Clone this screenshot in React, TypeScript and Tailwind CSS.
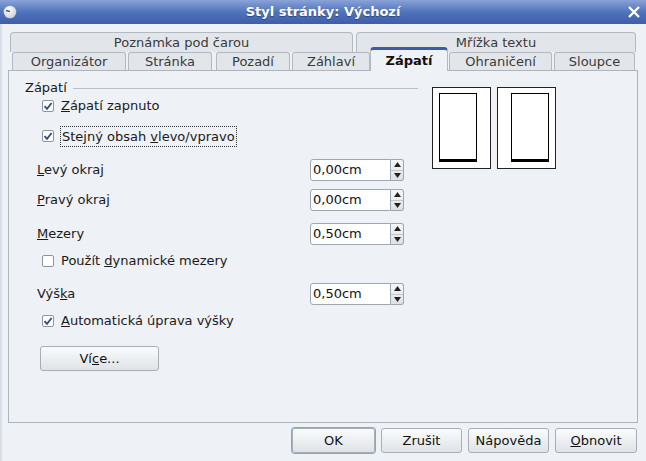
import React from "react";

const font = { fontFamily: '"DejaVu Sans", "Liberation Sans", sans-serif' };

const topTabs = [
  { label: "Poznámka pod čarou", cls: "ml-[2px] w-[343px]" },
  { label: "Mřížka textu", cls: "ml-[3px] w-[280px]" },
];

const bottomTabs = [
  { label: "Organizátor", cls: "ml-[4px] w-[114px]" },
  { label: "Stránka", cls: "ml-[2px] w-[84px]" },
  { label: "Pozadí", cls: "ml-[4px] w-[74px]" },
  { label: "Záhlaví", cls: "ml-[2px] w-[78px]" },
  { label: "Zápatí", cls: "w-[78px]", active: true },
  { label: "Ohraničení", cls: "ml-[1px] w-[103px]" },
  { label: "Sloupce", cls: "ml-[2px] w-[81px]" },
];

const Check: React.FC<{ checked?: boolean }> = ({ checked }) => (
  <span className="flex h-[12px] w-[12px] shrink-0 items-center justify-center rounded-[2px] border border-[#8e959d] bg-white">
    {checked && (
      <svg width="10" height="10" viewBox="0 0 10 10">
        <path d="M1.5 5.2 L4 7.8 L8.6 2" fill="none" stroke="#2f4c86" strokeWidth="1.8" />
      </svg>
    )}
  </span>
);

const Spin: React.FC<{ value: string }> = ({ value }) => (
  <div className="flex h-[22px]">
    <div className="flex w-[81px] items-center rounded-l-[3px] border border-[#9ea6ae] bg-white pl-[2px] text-[13px] text-[#111]">
      {value}
    </div>
    <div className="flex w-[13px] flex-col rounded-r-[3px] border border-l-0 border-[#9ea6ae] bg-gradient-to-b from-[#f6f7f8] to-[#dde1e5]">
      <div className="flex flex-1 items-center justify-center border-b border-[#c3c8cd]">
        <svg width="7" height="5" viewBox="0 0 7 5">
          <path d="M0 5 L3.5 0 L7 5 Z" fill="#222" />
        </svg>
      </div>
      <div className="flex flex-1 items-center justify-center">
        <svg width="7" height="5" viewBox="0 0 7 5">
          <path d="M0 0 L3.5 5 L7 0 Z" fill="#222" />
        </svg>
      </div>
    </div>
  </div>
);

const FieldRow: React.FC<{ label: React.ReactNode; value: string; cls: string }> = ({
  label,
  value,
  cls,
}) => (
  <div className={`flex items-center pl-[28px] ${cls}`}>
    <span className="w-[273px]">{label}</span>
    <Spin value={value} />
  </div>
);

const Btn: React.FC<{ children: React.ReactNode; cls: string }> = ({ children, cls }) => (
  <button
    className={`flex h-[25px] items-center justify-center rounded-[3px] border border-[#a7aeb6] bg-gradient-to-b from-[#fafbfc] to-[#dfe3e7] text-[13px] text-[#111] ${cls}`}
  >
    <span>{children}</span>
  </button>
);

const Preview: React.FC<{ mirrored?: boolean }> = ({ mirrored }) => (
  <div
    className={`flex h-[82px] w-[59px] border border-[#222] bg-white pt-[5px] pb-[6px] ${
      mirrored ? "pl-[13px] pr-[6px]" : "pl-[6px] pr-[13px]"
    }`}
  >
    <div className="flex-1 border border-b-[3px] border-black bg-white" />
  </div>
);

export default function App() {
  return (
    <div
      className="flex h-[461px] w-[646px] flex-col overflow-hidden bg-[#eef1f6] text-[13px] text-[#1a1a1a]"
      style={font}
    >
      <div className="relative flex h-[24px] items-center justify-center bg-gradient-to-b from-[#8aa3d8] via-[#5073bb] to-[#3d5fa9]">
        <svg className="absolute left-[3px] top-[5px]" width="14" height="14" viewBox="0 0 14 14">
          <defs>
            <radialGradient id="ball" cx="0.4" cy="0.35" r="0.7">
              <stop offset="0" stopColor="#ffffff" />
              <stop offset="1" stopColor="#c9ced6" />
            </radialGradient>
          </defs>
          <circle cx="7" cy="7" r="6.3" fill="url(#ball)" />
          <path d="M3 5.5 L7 6.5" stroke="#555" strokeWidth="1.3" />
        </svg>
        <span className="text-[13px] font-bold text-white [text-shadow:0_1px_1px_rgba(0,0,0,0.35)]">
          Styl stránky: Výchozí
        </span>
        <svg className="absolute right-[6px] top-[6px]" width="12" height="12" viewBox="0 0 12 12">
          <path d="M1 1 L11 11 M11 1 L1 11" stroke="white" strokeWidth="2.4" />
        </svg>
      </div>

      <div className="flex flex-1 flex-col border-l-[2px] border-[#d9dfe8] pl-[6px] pr-[9px]">
        <div className="mt-[8px] flex h-[20px]">
          {topTabs.map((t) => (
            <div
              key={t.label}
              className={`flex items-center justify-center rounded-t-[4px] border border-b-0 border-[#b3b9c0] bg-[#e2e6eb] text-[#3a3a3a] ${t.cls}`}
            >
              {t.label}
            </div>
          ))}
        </div>
        <div className="flex h-[18px] items-end">
          {bottomTabs.map((t) =>
            t.active ? (
              <div
                key={t.label}
                className={`relative z-10 -mb-px flex h-[24px] items-center justify-center rounded-t-[4px] border-x border-t-[3px] border-x-[#b3b9c0] border-t-[#3b5ba6] bg-[#eef1f6] font-bold text-[#111] ${t.cls}`}
              >
                {t.label}
              </div>
            ) : (
              <div
                key={t.label}
                className={`flex h-[18px] items-center justify-center rounded-t-[3px] border border-b-0 border-[#b3b9c0] bg-[#e2e6eb] text-[#3a3a3a] ${t.cls}`}
              >
                {t.label}
              </div>
            )
          )}
        </div>

        <div className="flex h-[353px] w-[630px] border border-[#adb4bb]">
          <div className="flex w-[409px] flex-col">
            <div className="mt-[8px] flex h-[18px] items-center pl-[16px]">
              <span>Zápatí</span>
              <span className="ml-[6px] h-px flex-1 bg-[#b9bfc6]" />
            </div>
            <div className="flex h-[18px] items-center gap-[7px] pl-[33px]">
              <Check checked />
              <span>
                <span className="underline">Z</span>ápatí zapnuto
              </span>
            </div>
            <div className="mt-[10px] flex h-[22px] items-center gap-[6px] pl-[33px]">
              <Check checked />
              <span className="inline-block border border-dotted border-[#333] px-[1px] leading-[19px]">
                Stejný obsah <span className="underline">v</span>levo/vpravo
              </span>
            </div>
            <FieldRow
              cls="mt-[12px]"
              label={
                <>
                  <span className="underline">L</span>evý okraj
                </>
              }
              value="0,00cm"
            />
            <FieldRow
              cls="mt-[8px]"
              label={
                <>
                  <span className="underline">P</span>ravý okraj
                </>
              }
              value="0,00cm"
            />
            <FieldRow
              cls="mt-[12px]"
              label={
                <>
                  <span className="underline">M</span>ezery
                </>
              }
              value="0,50cm"
            />
            <div className="mt-[7px] flex h-[18px] items-center gap-[7px] pl-[33px]">
              <Check />
              <span>
                Použít <span className="underline">d</span>ynamické mezery
              </span>
            </div>
            <FieldRow
              cls="mt-[13px]"
              label={
                <>
                  Výš<span className="underline">k</span>a
                </>
              }
              value="0,50cm"
            />
            <div className="mt-[7px] flex h-[18px] items-center gap-[7px] pl-[33px]">
              <Check checked />
              <span>
                <span className="underline">A</span>utomatická úprava výšky
              </span>
            </div>
            <div className="mt-[16px] pl-[31px]">
              <Btn cls="w-[119px]">
                Ví<span className="underline">c</span>e...
              </Btn>
            </div>
          </div>
          <div className="ml-[14px] mt-[16px] flex gap-[6px]">
            <Preview />
            <Preview mirrored />
          </div>
        </div>

        <div className="mt-[5px] flex justify-end gap-[6px]">
          <Btn cls="w-[83px] border-[#2d416b] ring-1 ring-[#8fa3c9]">OK</Btn>
          <Btn cls="w-[81px]">Zrušit</Btn>
          <Btn cls="w-[81px]">Nápověda</Btn>
          <Btn cls="w-[82px]">
            <span className="underline">O</span>bnovit
          </Btn>
        </div>
      </div>
    </div>
  );
}
